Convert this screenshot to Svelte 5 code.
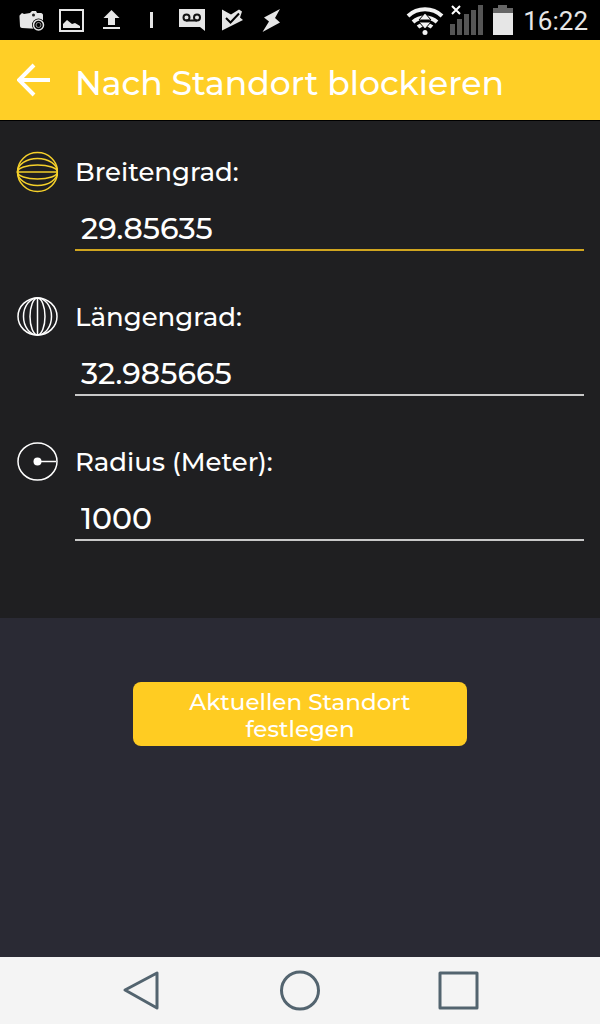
<script lang="ts">
  type Icon = 'latitude' | 'longitude' | 'radius';
  interface Field {
    id: Icon;
    label: string;
    value: string;
  }

  let fields = $state<Field[]>([
    { id: 'latitude', label: 'Breitengrad:', value: '29.85635' },
    { id: 'longitude', label: 'Längengrad:', value: '32.985665' },
    { id: 'radius', label: 'Radius (Meter):', value: '1000' },
  ]);
  let active = $state<Icon>('latitude');
</script>

<div class="screen">
  <div class="status">
    <div class="notes">
      <svg viewBox="0 0 40 40" aria-hidden="true">
        <path fill="#e6e6e6" d="M9 15l2-2 2 1 6-1 2-2h4l1 2h4c1 0 2 1 2 2v8l-4 6-17-1c-1 0-2-1-2-2l-.500-9c0-1 0-2 .500-2z" />
        <circle cx="27.500" cy="25" r="6.500" fill="#000" />
        <circle cx="27.500" cy="25" r="5" fill="none" stroke="#e6e6e6" stroke-width="1.500" />
        <circle cx="27.500" cy="25" r="2.500" fill="none" stroke="#999" />
        <circle cx="22.500" cy="15" r="1.500" fill="#222" />
      </svg>
      <svg viewBox="0 0 40 40" aria-hidden="true">
        <rect x="9" y="10" width="23" height="21" fill="none" stroke="#e6e6e6" stroke-width="2" />
        <path fill="#e6e6e6" d="M12 28v-4l4-4 5 4 3-1 5 3v2z" />
      </svg>
      <svg viewBox="0 0 40 40" aria-hidden="true">
        <path fill="#e6e6e6" d="M20.500 10l8 8H24v7h-7v-7h-4.500zM12 27h17v2H12z" />
      </svg>
      <svg viewBox="0 0 40 40" aria-hidden="true">
        <path fill="#e6e6e6" d="M19 12h3v16h-3z" />
      </svg>
      <svg viewBox="0 0 40 40" aria-hidden="true">
        <path fill="#e6e6e6" d="M8 9h26v22l-5-4H8z" />
        <g fill="none" stroke="#111" stroke-width="2">
          <circle cx="15.500" cy="17.500" r="3" />
          <circle cx="26" cy="17.500" r="3" />
          <path d="M15 20.500h11" />
        </g>
      </svg>
      <svg viewBox="0 0 40 40" aria-hidden="true">
        <path fill="#e6e6e6" d="M11 9.500l9 5 8-5 3 2-2 6 3 2.500-21 10.500z" />
        <path d="M15 18l4.500 4.500 8.500-9" fill="none" stroke="#000" stroke-width="2" />
      </svg>
      <svg viewBox="0 0 40 40" aria-hidden="true">
        <path fill="#e6e6e6" d="M29 9L13 17.500l5 4-6.500 10.500L29 22.500 24 18z" />
      </svg>
    </div>
    <svg class="wifi" viewBox="0 0 38 40" aria-hidden="true">
      <g fill="none" stroke="#f2f2f2" stroke-width="4">
        <path d="M2 16a25 25 0 0 1 34 0" />
        <path d="M7 22a18 18 0 0 1 24 0" />
        <path d="M12 27a11 11 0 0 1 14 0" />
      </g>
      <path fill="#f2f2f2" stroke="#000" stroke-width="1" d="M19 13l6 7H13zM13 22h12l-6 7z" />
      <circle cx="19" cy="32.500" r="2.500" fill="#f2f2f2" />
    </svg>
    <svg class="signal" viewBox="0 0 36 40" aria-hidden="true">
      <path fill="#555" d="M0 24h5v11H0zM7 19h5v16H7zM14 14h5v21h-5zM21 10h5v25h-5zM28 5h5v30h-5z" />
      <path d="M2 6l8 8M10 6l-8 8" stroke="#fff" stroke-width="2" />
    </svg>
    <svg class="battery" viewBox="0 0 22 40" aria-hidden="true">
      <path fill="#666" d="M5 5h9v3h6v6H0V8h5z" />
      <path fill="#e6e6e6" d="M0 13h20v22H0z" />
    </svg>
    <span class="clock">16:22</span>
  </div>

  <header>
    <button class="back" aria-label="Zurück">
      <svg viewBox="0 0 34 34" aria-hidden="true">
        <path d="M17 2L2 17l15 15M2 17h31" fill="none" stroke="#fff" stroke-width="4" />
      </svg>
    </button>
    <h1>Nach Standort blockieren</h1>
  </header>

  <main>
    <form class="panel">
      {#each fields as field (field.id)}
        <div class="field" class:active={active === field.id}>
          <svg class="mark" viewBox="0 0 42 42" aria-hidden="true">
            {#if field.id === 'radius'}
              <ellipse cx="21.500" cy="20.500" rx="19.500" ry="18.500" />
              <path d="M21 20.500h19" />
              <circle class="dot" cx="21.500" cy="20.500" r="4" />
            {:else if field.id === 'longitude'}
              <ellipse cx="21.500" cy="20.500" rx="19.500" ry="18.500" />
              <ellipse cx="21.500" cy="20.500" rx="14" ry="18.500" />
              <ellipse cx="21.500" cy="20.500" rx="7.500" ry="18.500" />
              <path d="M21.500 2v37" />
            {:else}
              <ellipse cx="21.500" cy="21" rx="20" ry="19.500" />
              <ellipse cx="21.500" cy="21" rx="20" ry="13.500" />
              <ellipse cx="21.500" cy="21" rx="20" ry="7" />
              <path d="M1 21h40" />
            {/if}
          </svg>
          <label for={field.id}>{field.label}</label>
          <input id={field.id} type="text" inputmode="decimal" bind:value={field.value} onfocus={() => (active = field.id)} />
        </div>
      {/each}
    </form>

    <button class="locate">Aktuellen Standort festlegen</button>
  </main>

  <nav>
    <button aria-label="Zurück">
      <svg viewBox="0 0 44 44" aria-hidden="true"><path d="M38 5v35L6 22z" /></svg>
    </button>
    <button aria-label="Startseite">
      <svg viewBox="0 0 44 44" aria-hidden="true"><circle cx="22" cy="22.500" r="18.500" /></svg>
    </button>
    <button aria-label="Übersicht">
      <svg viewBox="0 0 44 44" aria-hidden="true"><rect x="3" y="5" width="37" height="35" /></svg>
    </button>
  </nav>
</div>

<style>
  :global(body) { margin: 0; background: #2a2a34; }
  .screen {
    min-height: 100vh; display: flex; flex-direction: column;
    font-family: Montserrat, Inter, sans-serif; font-weight: 500; color: #fff;
  }
  button { padding: 0; border: none; background: none; font: inherit; color: inherit; cursor: pointer; }
  svg { display: block; flex: none; }

  .status { display: flex; align-items: center; height: 40px; padding: 0 12px 0 11px; background: #000; }
  .notes { display: flex; margin-right: auto; }
  .notes svg { width: 40px; height: 40px; }
  .wifi { width: 38px; height: 40px; margin-right: 6px; }
  .signal { width: 36px; height: 40px; margin-right: 7px; }
  .battery { width: 22px; height: 40px; margin-right: 8px; }
  .clock { padding-top: 2px; font: 400 26px/40px Roboto, sans-serif; color: #e6e6e6; }

  header {
    display: flex; align-items: center; gap: 24px; height: 80px; padding: 0 17px;
    background: #ffcf26;
  }
  .back svg { width: 34px; height: 34px; }
  h1 { margin: 0; padding-top: 6px; font-size: 33px; line-height: 40px; font-weight: 500; }

  main { flex: 1; display: flex; flex-direction: column; align-items: center; }
  .panel {
    align-self: stretch; display: flex; flex-direction: column; gap: 44px;
    padding: 29px 16px 77px; border-top: 1px solid #000; background: #1f1f21;
  }
  .field { display: grid; grid-template-columns: 42px 1fr; column-gap: 17px; align-items: center; }
  .mark { width: 42px; height: 42px; fill: none; stroke: #fff; stroke-width: 1.5; }
  .dot { fill: #fff; stroke: none; }
  label { padding-top: 2px; font-size: 26px; line-height: 41px; }
  input {
    grid-column: 2; box-sizing: border-box; width: 100%; height: 58px; padding: 14px 6px 0;
    border: none; border-bottom: 2px solid #c8c8c8; outline: none; border-radius: 0;
    background: none; font: inherit; font-size: 30px; color: #fff;
  }
  .active .mark { stroke: #f5d02a; }
  .active input { border-color: #d0a51f; }

  .locate {
    box-sizing: border-box; width: 334px; max-width: 90%; margin: 64px 0; padding: 7px 40px 3px;
    border-radius: 8px; background: #ffcc22; font-size: 23px; line-height: 27px;
  }

  nav { display: flex; justify-content: center; gap: 115px; padding: 11px 0 12px; background: #f4f4f4; }
  nav svg { width: 44px; height: 44px; fill: none; stroke: #53646f; stroke-width: 3; stroke-linejoin: round; }
</style>
